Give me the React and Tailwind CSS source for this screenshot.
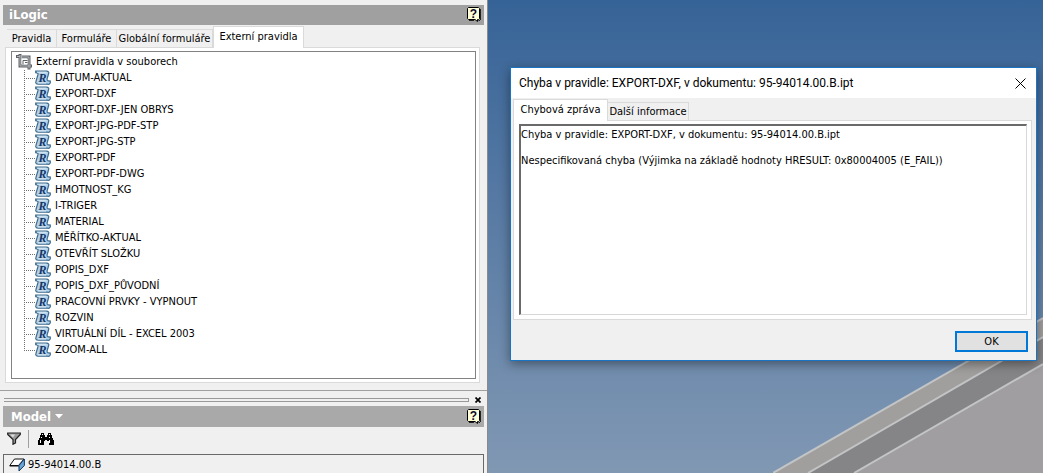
import React from 'react';

const rules = [
  'DATUM-AKTUAL',
  'EXPORT-DXF',
  'EXPORT-DXF-JEN OBRYS',
  'EXPORT-JPG-PDF-STP',
  'EXPORT-JPG-STP',
  'EXPORT-PDF',
  'EXPORT-PDF-DWG',
  'HMOTNOST_KG',
  'I-TRIGER',
  'MATERIAL',
  'MĚŘÍTKO-AKTUAL',
  'OTEVŘÍT SLOŽKU',
  'POPIS_DXF',
  'POPIS_DXF_PŮVODNÍ',
  'PRACOVNÍ PRVKY - VYPNOUT',
  'ROZVIN',
  'VIRTUÁLNÍ DÍL - EXCEL 2003',
  'ZOOM-ALL',
];

function HelpIcon() {
  return (
    <svg width="14" height="16" viewBox="0 0 14 16" aria-hidden="true">
      <path d="M1.5 .5h10l1 1v10l-1 1h-1v2l-2.500-2h-6.500l-1-1v-10z" fill="#ffffd8" stroke="#000" />
      <path d="M13.500 2v11M2 13.500h5M11.500 13.500h1.500" stroke="#222" fill="none" />
      <text x="6.500" y="11" textAnchor="middle" fontSize="12" fontWeight="700" fontFamily="Liberation Sans, sans-serif" fill="#0a0a30">?</text>
    </svg>
  );
}

function FolderRootIcon() {
  return (
    <svg width="16" height="16" viewBox="0 0 16 16" fill="none" aria-hidden="true">
      <path d="M0 2.500h3M4 0v12h12M6 3h7v12.500" stroke="#5f6266" strokeWidth="3" />
      <path d="M1 2.500h3M4 1v11h11M6 3h7v11.500" stroke="#b4b7ba" />
      <path d="M5.500 4.500h6v6h-6z" fill="#fff" />
      <path d="M7 10.500v-4h4.500M9 8.500h2.500" stroke="#5f6266" />
    </svg>
  );
}

function RuleIcon() {
  return (
    <svg width="16" height="16" viewBox="0 0 16 16" aria-hidden="true">
      <path
        d="M.7 1.200h10.800c2.200 0 2.600 1.300 2 2.800l-1.300 4.500c-.4 1.800.3 2.700 1.600 2.400l1.500.2v1.600c-.5 1.500-1.700 1.800-3 1.500H3.200C.9 14.200.4 12.800 1 11.200l2-6.700c.3-1.200-.2-1.700-2.300-1.800z"
        fill="#b4d2e8"
        stroke="#3f6c90"
        strokeWidth="1.200"
      />
      <path d="M2 2.200h9.500M3 13h8" stroke="#dcebf6" />
      <text x="7.500" y="11.800" textAnchor="middle" fontSize="12" fontStyle="italic" fontWeight="700" fontFamily="Liberation Serif, serif" fill="#15366a">R</text>
    </svg>
  );
}

function Branch({ last }) {
  return (
    <svg width="11" height="16" viewBox="0 0 11 16" fill="none" stroke="#707070" strokeDasharray="1 1" aria-hidden="true">
      <path d={last ? 'M.5 0v9' : 'M.5 0v16'} />
      <path d="M2 8.500h9" />
    </svg>
  );
}

function FilterIcon() {
  return (
    <svg width="14" height="13" viewBox="0 0 14 13" aria-hidden="true">
      <path d="M.7 1h12.600v1.500L8.500 7.500V11l-2.500 1.300V7.500L.7 2.500z" fill="#999" stroke="#222" strokeWidth="1.200" />
      <path d="M3 2.500h5l-2 3z" fill="#ddd" />
    </svg>
  );
}

function BinocularsIcon() {
  return (
    <svg width="16" height="14" viewBox="0 0 16 14" aria-hidden="true">
      <path d="M3 1h3v2h1v2h2V3h1V1h3v2h1v3h1v2h1v5h-5V9H9V8H7v1H6v4H0V8h1V6h1V3h1z" fill="#000" />
      <path d="M4.500 2v1M11.500 2v1M3.500 5v1M11.500 5v1M2.500 8v3M11.500 8v3" stroke="#fff" fill="none" />
    </svg>
  );
}

function PartIcon() {
  return (
    <svg width="16" height="14" viewBox="0 0 16 14" aria-hidden="true">
      <path d="M5.500 1h9.500L9.500 7.500H.8z" fill="#fff" stroke="#111" />
      <path d="M15.400 1v6.500L10 13V7.500z" fill="#6ba3d6" stroke="#123a66" />
      <path d="M.7 8h9" stroke="#111" />
    </svg>
  );
}

function PanelHeader({ children, tone }) {
  return (
    <header className={`mx-[3px] flex items-center justify-between pr-[3px] text-[13px] font-bold text-white ${tone}`}>
      {children}
      <button type="button" aria-label="Nápověda"><HelpIcon /></button>
    </header>
  );
}

function Tab({ active, children, className = '' }) {
  return (
    <button
      type="button"
      role="tab"
      aria-selected={!!active}
      className={
        (active
          ? 'z-10 -mb-px h-[22px] border border-b-0 border-[#dadada] bg-white pb-0.5 '
          : 'h-[18px] border border-b-0 border-l-0 border-[#dadada] bg-[#f0f0f0] ') +
        'whitespace-nowrap ' + className
      }
    >
      {children}
    </button>
  );
}

function SidePanel() {
  return (
    <aside className="flex w-[488px] shrink-0 flex-col border-r border-[#8a8a8a] bg-[#f0f0f0] pt-[5px]">
      <PanelHeader tone="h-5 bg-[#a0a0a0] pl-1.5">
        <h1>iLogic</h1>
      </PanelHeader>
      <div role="tablist" className="ml-[7px] mt-px flex items-end">
        <Tab className="w-[50px] border-l">Pravidla</Tab>
        <Tab className="w-[60px]">Formuláře</Tab>
        <Tab className="w-24">Globální formuláře</Tab>
        <Tab active className="w-[91px]">Externí pravidla</Tab>
      </div>
      <div className="ml-[5px] mr-[7px] border border-[#dadada] bg-white py-[3px] pl-[5px] pr-[3px]">
        <div className="border border-[#828282] pb-5 pl-1 pt-0.5">
          <div className="flex h-4 items-center gap-1">
            <FolderRootIcon />
            <span>Externí pravidla v souborech</span>
          </div>
          <ul className="pl-2">
            {rules.map((rule, i) => (
              <li key={rule} className="flex h-4 items-center">
                <Branch last={i === rules.length - 1} />
                <RuleIcon />
                <span className="ml-1 whitespace-nowrap">{rule}</span>
              </li>
            ))}
          </ul>
        </div>
      </div>
      <div className="mt-[7px] flex items-center justify-between border-t border-[#a0a0a0] pb-px pl-1 pr-1 pt-[3px]">
        <div className="mr-1 h-1 flex-1 border-y border-r border-[#999]" />
        <button type="button" aria-label="Zavřít panel" className="flex h-[11px] w-2.5 items-center justify-center">
          <svg width="6" height="6" viewBox="0 0 6 6"><path d="M.5.5l5 5M5.500.5l-5 5" stroke="#000" strokeWidth="1.700" /></svg>
        </button>
      </div>
      <PanelHeader tone="h-[21px] bg-[#a9a9a9] pl-2">
        <button type="button" className="flex items-center gap-1">
          Model
          <svg width="8" height="5" viewBox="0 0 8 5"><path d="M0 0h8L4 4.500z" fill="#fff" /></svg>
        </button>
      </PanelHeader>
      <div className="flex h-[27px] items-center pl-[7px] pb-1">
        <button type="button" aria-label="Filtr"><FilterIcon /></button>
        <span className="ml-[7px] mr-[9px] h-[18px] w-px bg-[#a0a0a0]" />
        <button type="button" aria-label="Najít"><BinocularsIcon /></button>
      </div>
      <div className="mx-[3px] flex-1 border border-b-0 border-[#696969] pl-[5px] pt-0.5">
        <div className="flex h-4 items-center gap-[3px]">
          <PartIcon />
          <span>95-94014.00.B</span>
        </div>
      </div>
    </aside>
  );
}

function ErrorDialog() {
  return (
    <section role="dialog" aria-labelledby="dialog-title" className="relative ml-[22px] mr-1.5 mt-[67px] flex flex-col border border-[#1a74c4] bg-[#f0f0f0] shadow-[0_3px_10px_rgba(0,0,0,0.4)]">
      <header className="flex h-[30px] items-center justify-between bg-white pl-2 pr-2.5">
        <h2 id="dialog-title" className="whitespace-nowrap font-['Roboto','Noto_Sans',sans-serif] text-[12px]">
          Chyba v pravidle: EXPORT-DXF, v dokumentu: 95-94014.00.B.ipt
        </h2>
        <button type="button" aria-label="Zavřít">
          <svg width="11" height="11" viewBox="0 0 11 11"><path d="M.5.5l10 10M10.500.5l-10 10" stroke="#000" /></svg>
        </button>
      </header>
      <div role="tablist" className="ml-0.5 mt-px flex items-end">
        <Tab active className="w-[95px]">Chybová zpráva</Tab>
        <Tab className="w-[81px]">Další informace</Tab>
      </div>
      <div className="ml-0.5 mr-1 flex border border-[#dadada] bg-white pb-1 pl-[5px] pr-1 pt-[3px]">
        <textarea
          readOnly
          aria-label="Chybová zpráva"
          className="h-[191px] w-full resize-none border-b border-l-2 border-r border-t-2 border-b-[#d8d8d8] border-l-[#6a6a6a] border-r-[#d8d8d8] border-t-[#6a6a6a] bg-white pt-0.5 leading-[13px] outline-none"
          value={'Chyba v pravidle: EXPORT-DXF, v dokumentu: 95-94014.00.B.ipt\n\nNespecifikovaná chyba (Výjimka na základě hodnoty HRESULT: 0x80004005 (E_FAIL))'}
        />
      </div>
      <footer className="flex justify-end pb-2 pr-2 pt-[11px]">
        <button type="button" className="h-[21px] w-[73px] border-2 border-[#0078d7] bg-[#e1e1e1] leading-none">OK</button>
      </footer>
    </section>
  );
}

export default function App() {
  return (
    <div className="flex min-h-screen font-['DejaVu_Sans_Condensed','DejaVu_Sans',sans-serif] text-[11px] leading-4 text-black">
      <SidePanel />
      <main className="relative min-w-0 flex-1 overflow-hidden bg-linear-to-b from-[#366397] to-[#8198b3]">
        <svg className="absolute bottom-0 right-0" width="270" height="160" viewBox="0 0 270 160" aria-hidden="true">
          <path d="M0 160L270 5V160z" fill="#a09f9d" />
          <path d="M35 160L270 24V160z" fill="#858587" />
          <path d="M81 160L270 51V160z" fill="#a09ea1" />
          <path d="M0 160L270 5M35 160L270 24M81 160L270 51" stroke="#c2c4c6" strokeWidth="2" />
        </svg>
        <ErrorDialog />
      </main>
    </div>
  );
}
